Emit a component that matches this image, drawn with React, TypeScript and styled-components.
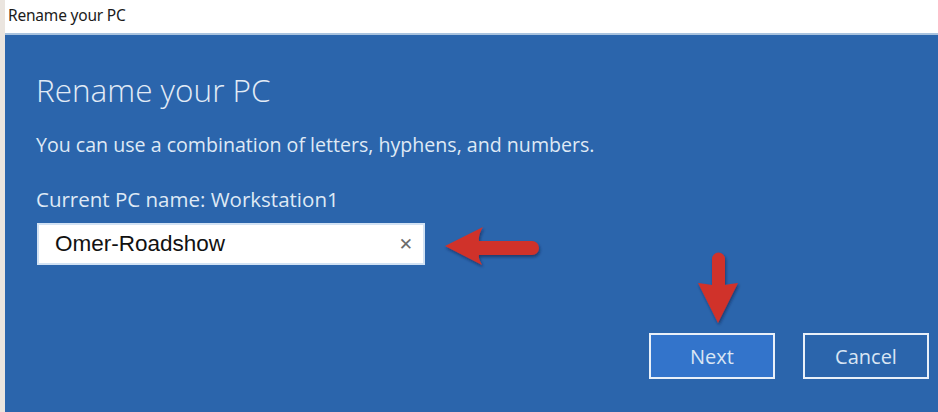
import React from "react";
import styled, { createGlobalStyle } from "styled-components";

const Global = createGlobalStyle`
  html, body { margin: 0; padding: 0; background: #ece6e0; }
  body { font-family: "Open Sans", "Noto Sans", sans-serif; }
  * { box-sizing: border-box; }
`;

const Frame = styled.div`
  width: 938px;
  height: 412px;
  display: flex;
  flex-direction: column;
  border-left: 5px solid #ebe5df;
  background: #2b65ac;
  overflow: hidden;
  position: relative;
`;

const TitleBar = styled.div`
  height: 35px;
  flex: none;
  background: #ffffff;
  border-bottom: 2px solid #a9c3df;
  display: flex;
  align-items: center;
  padding-left: 3px;
  padding-bottom: 3px;
  font-family: "Noto Sans", sans-serif;
  font-size: 15.5px;
  letter-spacing: -0.2px;
  color: #1b1b1b;
`;

const Content = styled.div`
  flex: 1;
  position: relative;
  padding: 37px 0 0 31px;
  display: flex;
  flex-direction: column;
  color: #e4edf7;
`;

const Heading = styled.h1`
  margin: 0;
  font-family: "Open Sans", sans-serif;
  font-weight: 300;
  font-size: 31.5px;
  line-height: 36px;
  color: #e2ebf6;
`;

const Text = styled.p<{ $top: number; $size: number }>`
  margin: ${(p) => p.$top}px 0 0 0;
  font-family: "Open Sans", sans-serif;
  font-size: ${(p) => p.$size}px;
  line-height: 26px;
  color: #dfe9f5;
`;

const InputBox = styled.div`
  margin-top: 11px;
  margin-left: 1px;
  width: 388px;
  height: 42px;
  background: #ffffff;
  border: 2px solid #d2e2f4;
  display: flex;
  align-items: center;
  padding: 0 10px 0 16px;
`;

const InputText = styled.span`
  flex: 1;
  font-family: "Liberation Sans", Arial, sans-serif;
  font-size: 22.5px;
  color: #111;
`;

const Clear = styled.span`
  font-family: "DejaVu Sans", sans-serif;
  font-size: 17px;
  color: #6c6c6c;
  line-height: 1;
`;

const ButtonRow = styled.div`
  margin-top: auto;
  margin-bottom: 33px;
  align-self: flex-end;
  margin-right: 9px;
  display: flex;
  gap: 28px;
`;

const Button = styled.div<{ $primary?: boolean }>`
  width: 126px;
  height: 46px;
  border: 2px solid #e9f0f9;
  background: ${(p) => (p.$primary ? "#3374cb" : "transparent")};
  display: flex;
  align-items: center;
  justify-content: center;
  font-family: "Open Sans", sans-serif;
  font-size: 20px;
  color: #d9e5f4;
`;

const Arrows = styled.svg`
  position: absolute;
  left: -5px;
  top: -35px;
  width: 938px;
  height: 412px;
  pointer-events: none;
`;

export default function App() {
  return (
    <>
      <Global />
      <Frame>
        <TitleBar>Rename your PC</TitleBar>
        <Content>
          <Heading>Rename your PC</Heading>
          <Text $top={24} $size={19.6}>You can use a combination of letters, hyphens, and numbers.</Text>
          <Text $top={28} $size={20.5}>Current PC name: Workstation1</Text>
          <InputBox>
            <InputText>Omer-Roadshow</InputText>
            <Clear>✕</Clear>
          </InputBox>
          <ButtonRow>
            <Button $primary>Next</Button>
            <Button>Cancel</Button>
          </ButtonRow>
          <Arrows viewBox="0 0 938 412">
            <defs>
              <filter id="sh" x="-20%" y="-20%" width="140%" height="140%">
                <feDropShadow dx="1" dy="2" stdDeviation="1.6" floodColor="#0b1f40" floodOpacity="0.6" />
              </filter>
            </defs>
            <path
              d="M445,246 L483,227 Q478,235 479,241 L532,241 A7,7 0 0 1 532,255 L479,255 Q478,258 482,265 Z"
              fill="#d0322a"
              filter="url(#sh)"
            />
            <path
              d="M712,259 A6.5,6.5 0 0 1 725,259 L725,285 Q730,284 738,283 L718,323 L698,283 Q706,284 712,285 Z"
              fill="#d0322a"
              filter="url(#sh)"
            />
          </Arrows>
        </Content>
      </Frame>
    </>
  );
}
